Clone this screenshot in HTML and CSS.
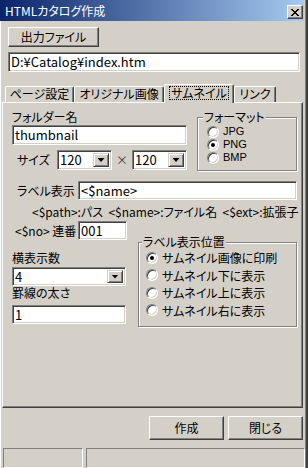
FILE: index.html
```html
<!DOCTYPE html>
<html lang="ja">
<head>
    <meta charset="UTF-8">
    <meta name="viewport" content="width=device-width, initial-scale=1.0">
    <title>HTMLカタログ作成</title>
    <link rel="stylesheet" href="styles.css">
</head>
<body>
    <div class="window">
        <div class="titlebar">
            <span class="title">HTMLカタログ作成</span>
            <span class="close-btn">
                <svg width="8" height="7" viewBox="0 0 8 7"><path d="M0 0h2v1h1v1h2v-1h1v-1h2v1h-1v1h-1v1h-1v1h1v1h1v1h1v1h-2v-1h-1v-1h-2v1h-1v1h-2v-1h1v-1h1v-1h1v-1h-1v-1h-1v-1h-1z"/></svg>
            </span>
        </div>
        <div class="client">
            <button class="btn btn-file">出力ファイル</button>
            <div class="edit edit-path">D:¥Catalog¥index.htm</div>

            <div class="tabs">
                <div class="tab tab-page">ページ設定</div>
                <div class="tab tab-orig">オリジナル画像</div>
                <div class="tab tab-thumb active"><span class="focus">サムネイル</span></div>
                <div class="tab tab-link">リンク</div>
            </div>

            <div class="panel">
                <div class="row-top">
                    <div class="col-folder">
                        <div class="label">フォルダー名</div>
                        <div class="edit edit-folder">thumbnail</div>
                        <div class="size-row">
                            <span class="size-label">サイズ</span>
                            <div class="combo combo-size"><span class="combo-text">120</span><span class="drop"></span></div>
                            <span class="times">×</span>
                            <div class="combo combo-size"><span class="combo-text">120</span><span class="drop"></span></div>
                        </div>
                    </div>
                    <fieldset class="group group-format">
                        <legend>フォーマット</legend>
                        <div class="radio radio-latin"><span class="radio-box"></span>JPG</div>
                        <div class="radio radio-latin"><span class="radio-box checked"></span>PNG</div>
                        <div class="radio radio-latin"><span class="radio-box"></span>BMP</div>
                    </fieldset>
                </div>

                <div class="row-label">
                    <span class="label-disp">ラベル表示</span>
                    <div class="edit edit-label">&lt;$name&gt;</div>
                </div>
                <div class="hint">&lt;$path&gt;:パス&nbsp; &lt;$name&gt;:ファイル名&nbsp; &lt;$ext&gt;:拡張子</div>
                <div class="row-no">
                    <span class="label-no">&lt;$no&gt; 連番</span>
                    <div class="edit edit-no">001</div>
                </div>

                <div class="row-bottom">
                    <div class="col-grid">
                        <div class="label label-cols">横表示数</div>
                        <div class="combo combo-cols"><span class="combo-text">4</span><span class="drop"></span></div>
                        <div class="label">罫線の太さ</div>
                        <div class="edit edit-border">1</div>
                    </div>
                    <fieldset class="group group-pos">
                        <legend>ラベル表示位置</legend>
                        <div class="radio radio-tall"><span class="radio-box checked"></span>サムネイル画像に印刷</div>
                        <div class="radio radio-tall"><span class="radio-box"></span>サムネイル下に表示</div>
                        <div class="radio radio-tall"><span class="radio-box"></span>サムネイル上に表示</div>
                        <div class="radio radio-tall"><span class="radio-box"></span>サムネイル右に表示</div>
                    </fieldset>
                </div>
            </div>

            <div class="actions">
                <button class="btn btn-action">作成</button>
                <button class="btn btn-action">閉じる</button>
            </div>

            <div class="statusbar">
                <div class="pane pane-left"></div>
                <div class="pane pane-main"></div>
            </div>
        </div>
    </div>
</body>
</html>
```

FILE: styles.css
```css
* {
    box-sizing: border-box;
}
body {
    margin: 0;
    background: #d4d0c8;
    font-family: "Noto Sans CJK JP", sans-serif;
    font-size: 12px;
    line-height: 14px;
    font-feature-settings: "palt";
    color: #000;
}
.window {
    width: 308px;
    height: 468px;
    border-right: 2px solid #404040;
    box-shadow: inset 1px 0 #fff, inset -1px 0 #808080;
    overflow: hidden;
}
.titlebar {
    height: 21px;
    margin-right: 2px;
    padding: 0 1px 0 5px;
    display: flex;
    justify-content: space-between;
    align-items: flex-start;
    background: linear-gradient(90deg, #0a246a, #a6caf0);
    color: #fff;
}
.title {
    margin-top: 4px;
}
.close-btn {
    margin-top: 5px;
    width: 16px;
    height: 14px;
    display: flex;
    justify-content: center;
    align-items: center;
    background: #d4d0c8;
    border: 1px solid;
    border-color: #fff #404040 #404040 #fff;
    box-shadow: inset -1px -1px #808080;
}

/* raised push buttons */
.btn {
    font: inherit;
    font-feature-settings: "palt";
    color: #000;
    background: #d4d0c8;
    border: 1px solid;
    border-color: #fff #404040 #404040 #fff;
    box-shadow: inset -1px -1px #808080;
    padding: 0;
}
.btn-file {
    display: block;
    margin: 6px 0 0 8px;
    width: 91px;
    height: 20px;
}

/* sunken edit fields */
.edit, .combo {
    background: #fff;
    border: 1px solid;
    border-color: #808080 #fff #fff #808080;
    box-shadow: inset 1px 1px #404040, inset -1px -1px #d4d0c8;
    display: flex;
    align-items: center;
    padding-left: 2px;
    white-space: nowrap;
    font-size: 13px;
    line-height: 14px;
}
.edit-path {
    margin: 5px 0 0 8px;
    width: 292px;
    height: 20px;
}

/* tabs */
.tabs {
    height: 30px;
    padding-left: 5px;
    display: flex;
    align-items: flex-end;
}
.tab {
    height: 16px;
    line-height: 13px;
    text-align: center;
    border-top: 1px solid #fff;
    border-left: 1px solid #fff;
    border-right: 1px solid #404040;
    border-radius: 2px 2px 0 0;
    box-shadow: inset -1px 0 #808080;
    white-space: nowrap;
}
.tab-page { width: 69px; }
.tab-orig { width: 90px; }
.tab-thumb { width: 70px; }
.tab-link { width: 42px; }
.tab.active {
    height: 19px;
    margin-bottom: -1px;
    position: relative;
    z-index: 1;
    background: #d4d0c8;
    padding-top: 1px;
}
.focus {
    display: inline-block;
    outline: 1px dotted #000;
    padding: 0 1px;
    line-height: 12px;
}

.panel {
    margin-left: 2px;
    width: 301px;
    height: 306px;
    border: 1px solid;
    border-color: #fff #404040 #404040 #fff;
    box-shadow: inset -1px -1px #808080;
    padding: 7px 5px 0 9px;
}

.row-top {
    display: flex;
    justify-content: space-between;
    align-items: flex-start;
}
.col-folder {
    width: 175px;
}
.edit-folder {
    margin-top: 1px;
    height: 20px;
}
.size-row {
    margin-top: 5px;
    height: 20px;
    display: flex;
    align-items: center;
}
.size-label {
    width: 45px;
    padding-left: 5px;
}
.combo {
    padding-right: 2px;
    justify-content: space-between;
}
.combo-size {
    width: 55px;
    height: 20px;
}
.times {
    width: 20px;
    text-align: center;
    color: #404040;
}
.drop {
    width: 16px;
    margin: 2px 0;
    height: calc(100% - 4px);
    background: #d4d0c8;
    border: 1px solid;
    border-color: #d4d0c8 #404040 #404040 #d4d0c8;
    box-shadow: inset 1px 1px #fff, inset -1px -1px #808080;
    display: flex;
    justify-content: center;
    align-items: center;
}
.drop::after {
    content: "";
    width: 7px;
    height: 4px;
    background: #000;
    clip-path: polygon(0 0, 100% 0, 50% 100%);
}

/* group boxes */
.group {
    margin: 0;
    min-width: 0;
    border: 1px solid #808080;
    box-shadow: inset 1px 1px #fff, 1px 1px #fff;
}
.group legend {
    padding: 0 1px;
    line-height: 12px;
    background: #d4d0c8;
}
.group-format {
    width: 100px;
    margin-top: 1px;
    padding: 2px 0 6px 5px;
}
.radio {
    height: 13px;
    line-height: 13px;
    display: flex;
    align-items: center;
    padding-left: 4px;
    white-space: nowrap;
}
.radio-latin {
    font-family: "Liberation Sans", sans-serif;
    font-size: 11px;
}
.radio-tall {
    height: 17.5px;
}
.radio-box {
    width: 12px;
    height: 12px;
    margin-right: 4px;
    border-radius: 50%;
    border: 1px solid;
    border-color: #808080 #fff #fff #808080;
    box-shadow: inset 1px 1px #404040, inset -1px -1px #d4d0c8;
    background: #fff;
    display: flex;
    justify-content: center;
    align-items: center;
    flex-shrink: 0;
}
.radio-box.checked::after {
    content: "";
    width: 4px;
    height: 4px;
    border-radius: 50%;
    background: #000;
}

.row-label {
    margin-top: 10px;
    height: 19px;
    display: flex;
    align-items: center;
}
.label-disp {
    width: 66px;
    padding-left: 5px;
}
.edit-label {
    flex: 1;
    height: 19px;
}
.hint {
    margin-top: 5px;
    padding-left: 20px;
    white-space: nowrap;
}
.row-no {
    margin-top: 2px;
    height: 19px;
    display: flex;
    align-items: center;
}
.label-no {
    width: 66px;
    padding-left: 3px;
}
.edit-no {
    width: 49px;
    height: 19px;
}

.row-bottom {
    margin-top: -4px;
    display: flex;
    justify-content: space-between;
    align-items: flex-start;
}
.col-grid {
    width: 114px;
}
.label-cols {
    margin-top: 15px;
}
.combo-cols {
    margin-top: 2px;
    height: 19px;
}
.edit-border {
    margin-top: 5px;
    height: 19px;
}
.group-pos {
    width: 159px;
    padding: 1px 0 7px 3px;
}

.actions {
    margin-top: 8px;
    padding-right: 3px;
    display: flex;
    justify-content: flex-end;
    gap: 4px;
}
.btn-action {
    width: 75px;
    height: 24px;
}

.statusbar {
    margin-top: 8px;
    height: 20px;
    padding: 0 1px 0 3px;
    display: flex;
    gap: 3px;
}
.pane {
    height: 20px;
    border: 1px solid;
    border-color: #808080 #fff #fff #808080;
}
.pane-left {
    width: 80px;
}
.pane-main {
    flex: 1;
}
```
